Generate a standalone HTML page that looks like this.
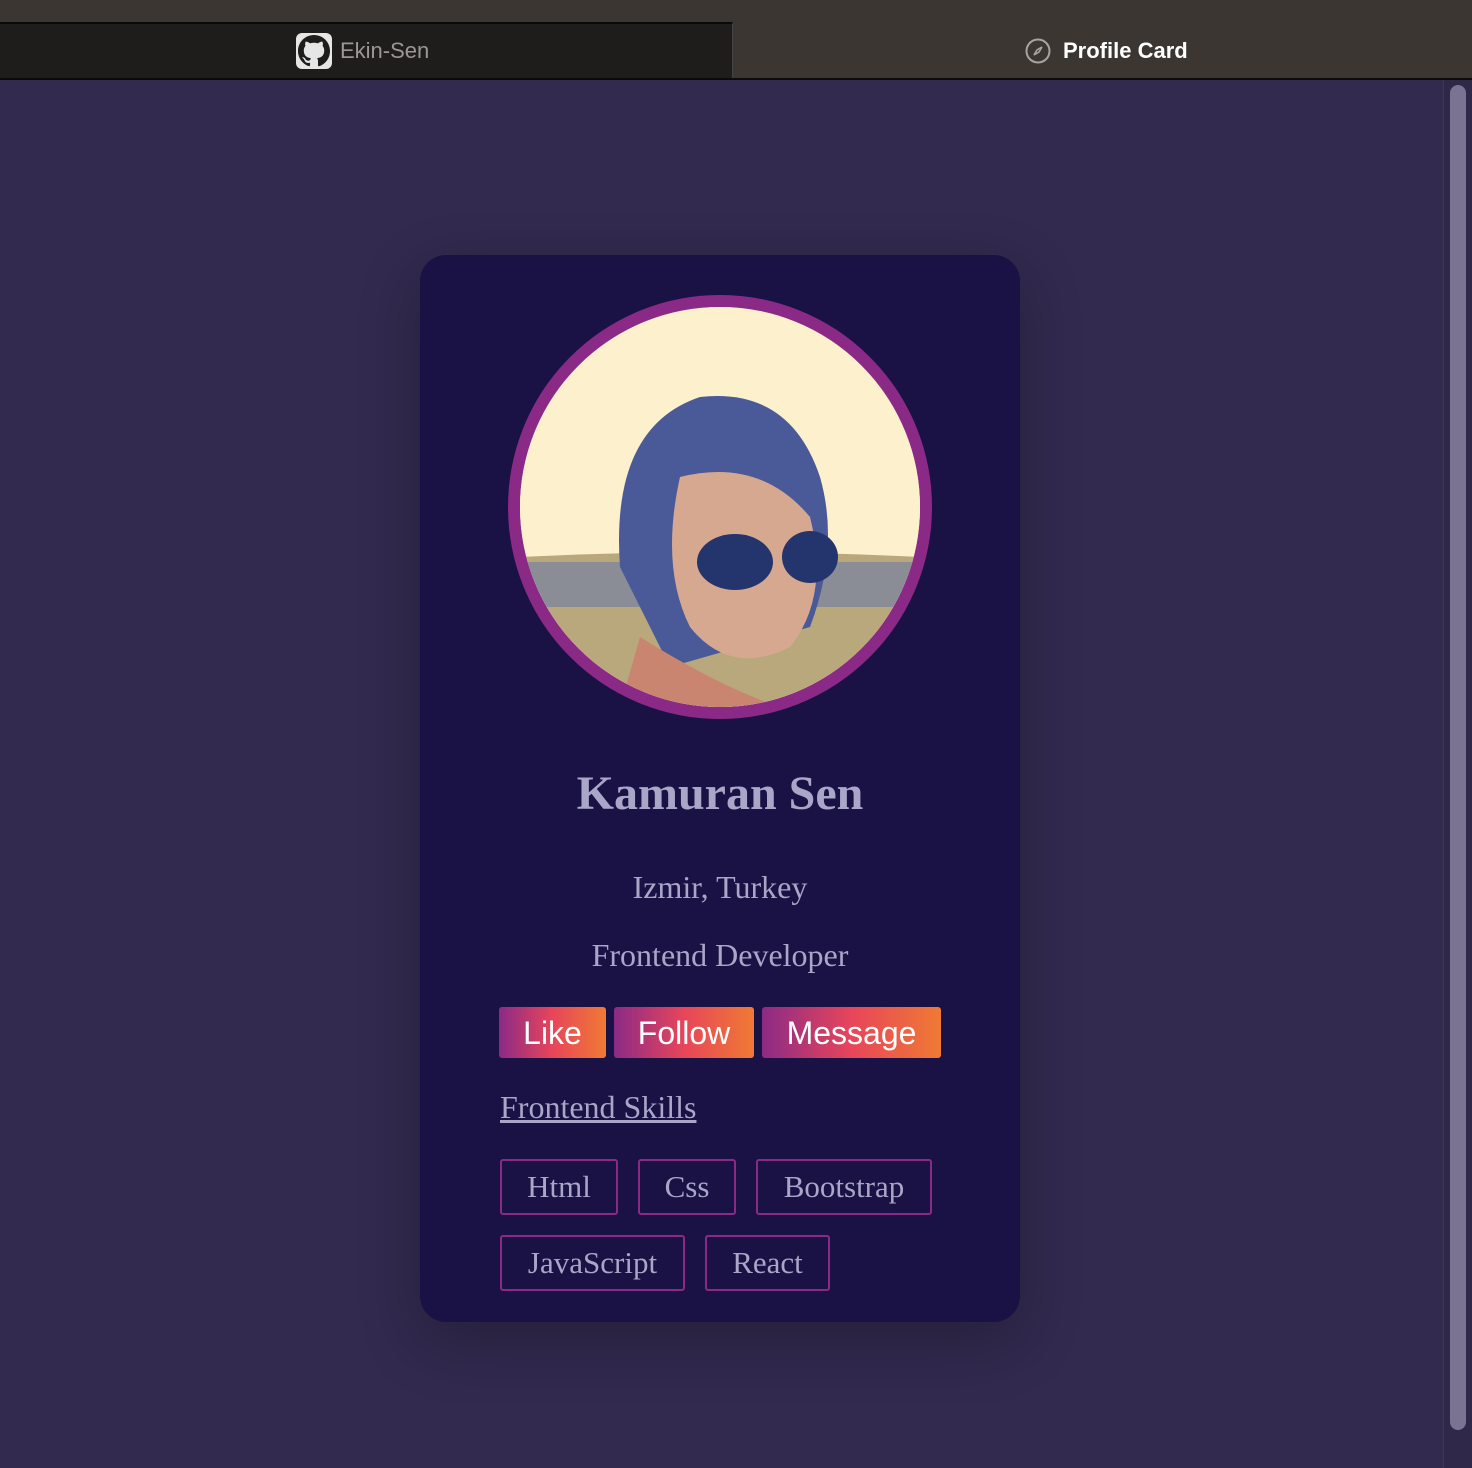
<!DOCTYPE html>
<html><head><meta charset="utf-8"><style>
*{margin:0;padding:0;box-sizing:border-box}
body{width:1472px;height:1468px;background:#322a4f;position:relative;overflow:hidden;font-family:"Liberation Serif",serif}
.top{position:absolute;left:0;top:0;width:1472px;height:22px;background:#3c3633}
.tab1{position:absolute;left:0;top:22px;width:733px;height:57px;background:#1f1d1c;border-top:2px solid #0a0a0a;border-right:1px solid #444}
.tab2{position:absolute;left:733px;top:22px;width:739px;height:57px;background:#3c3633}
.line{position:absolute;left:0;top:78px;width:1472px;height:2px;background:#0c0b0b}
.t{position:absolute;font-family:"Liberation Sans",sans-serif;font-size:22px;top:38px}
.sb{position:absolute;left:1443px;top:80px;width:29px;height:1388px;background:#2f2848;border-left:1px solid #3d3658}
.thumb{position:absolute;left:1450px;top:85px;width:16px;height:1345px;border-radius:8px;background:#7a7392}
.card{position:absolute;left:420px;top:255px;width:600px;height:1067px;background:#1a1244;border-radius:26px;box-shadow:0 20px 60px rgba(0,0,0,.25)}
.av{position:absolute;left:508px;top:295px;width:424px;height:424px;border-radius:50%;border:12px solid #8b2a86;overflow:hidden;background:#fdf0cc}
.c{position:absolute;left:0;width:1440px;text-align:center;color:#a9a6c8}
.btn{position:absolute;top:1007px;height:51px;border-radius:3px;background:linear-gradient(90deg,#8b2a86,#e8455a 50%,#ef7a33);color:#fff;font-family:"Liberation Sans",sans-serif;font-size:32px;text-align:center;line-height:53px}
.tag{position:absolute;height:56px;border:2px solid #8b2a86;border-radius:3px;color:#a9a6c8;font-size:31px;text-align:center;line-height:52px}
</style></head><body>
<div class="top"></div>
<div class="tab1"></div><div class="tab2"></div><div class="line"></div>
<div style="position:absolute;left:296px;top:33px;width:36px;height:36px;background:#e6e6e6;border-radius:6px"></div>
<svg style="position:absolute;left:298px;top:35px" width="32" height="32" viewBox="0 0 16 16"><path fill="#1f1d1c" d="M8 0C3.58 0 0 3.58 0 8c0 3.54 2.29 6.530 5.47 7.59.4.07.55-.17.55-.38v-1.33c-2.23.48-2.7-1.07-2.7-1.07-.36-.92-.89-1.170-.89-1.17-.73-.5.06-.49.06-.49.8.06 1.23.83 1.23.83.71 1.22 1.87.87 2.33.66.07-.52.28-.87.5-1.07-1.78-.2-3.64-.89-3.64-3.95 0-.87.31-1.59.82-2.15-.08-.2-.36-1.02.08-2.12 0 0 .67-.21 2.2.82a7.6 7.6 0 0 1 4 0c1.530-1.04 2.2-.82 2.2-.82.44 1.1.16 1.92.08 2.12.51.56.82 1.27.82 2.15 0 3.07-1.87 3.75-3.65 3.95.29.25.54.73.54 1.48v2.2c0 .21.15.46.55.38A8 8 0 0 0 16 8c0-4.420-3.58-8-8-8z"/></svg>
<div class="t" style="left:340px;color:#9a9794">Ekin-Sen</div>
<svg style="position:absolute;left:1024px;top:37px" width="28" height="28" viewBox="0 0 28 28"><circle cx="14" cy="14" r="11.5" fill="none" stroke="#a8a4a0" stroke-width="2"/><path d="M18 10l-5 3-3 5 5-3z" fill="none" stroke="#a8a4a0" stroke-width="1.6"/></svg>
<div class="t" style="left:1063px;color:#fff;font-weight:bold">Profile Card</div>
<div class="sb"></div><div class="thumb"></div>
<div class="card"></div>
<div class="av"><svg width="400" height="400" viewBox="0 0 400 400">
<rect width="400" height="400" fill="#fdf0cc"/>
<path d="M0 250 Q200 240 400 250 L400 400 L0 400Z" fill="#b9a87c"/>
<path d="M0 255 L400 255 L400 300 L0 300Z" fill="#6b7aa8" opacity=".6"/>
<path d="M100 260 Q90 120 180 90 Q270 80 300 170 Q320 240 290 320 L150 360Z" fill="#4a5a98"/>
<path d="M160 170 Q240 150 290 210 Q310 290 270 340 Q210 370 170 320 Q140 260 160 170Z" fill="#d7a890"/>
<ellipse cx="215" cy="255" rx="38" ry="28" fill="#24346c"/><ellipse cx="290" cy="250" rx="28" ry="26" fill="#24346c"/>
<path d="M120 330 Q200 380 260 400 L100 400Z" fill="#c98570"/>
</svg></div>
<div class="c" style="top:766px;font-size:48px;font-weight:bold">Kamuran Sen</div>
<div class="c" style="top:869px;font-size:32px">Izmir, Turkey</div>
<div class="c" style="top:937px;font-size:32px">Frontend Developer</div>
<div class="btn" style="left:499px;width:107px">Like</div>
<div class="btn" style="left:614px;width:140px">Follow</div>
<div class="btn" style="left:762px;width:179px">Message</div>
<div style="position:absolute;left:500px;top:1089px;font-size:32px;color:#a9a6c8;text-decoration:underline">Frontend Skills</div>
<div class="tag" style="left:500px;top:1159px;width:118px">Html</div>
<div class="tag" style="left:638px;top:1159px;width:98px">Css</div>
<div class="tag" style="left:756px;top:1159px;width:176px">Bootstrap</div>
<div class="tag" style="left:500px;top:1235px;width:185px">JavaScript</div>
<div class="tag" style="left:705px;top:1235px;width:125px">React</div>
</body></html>
